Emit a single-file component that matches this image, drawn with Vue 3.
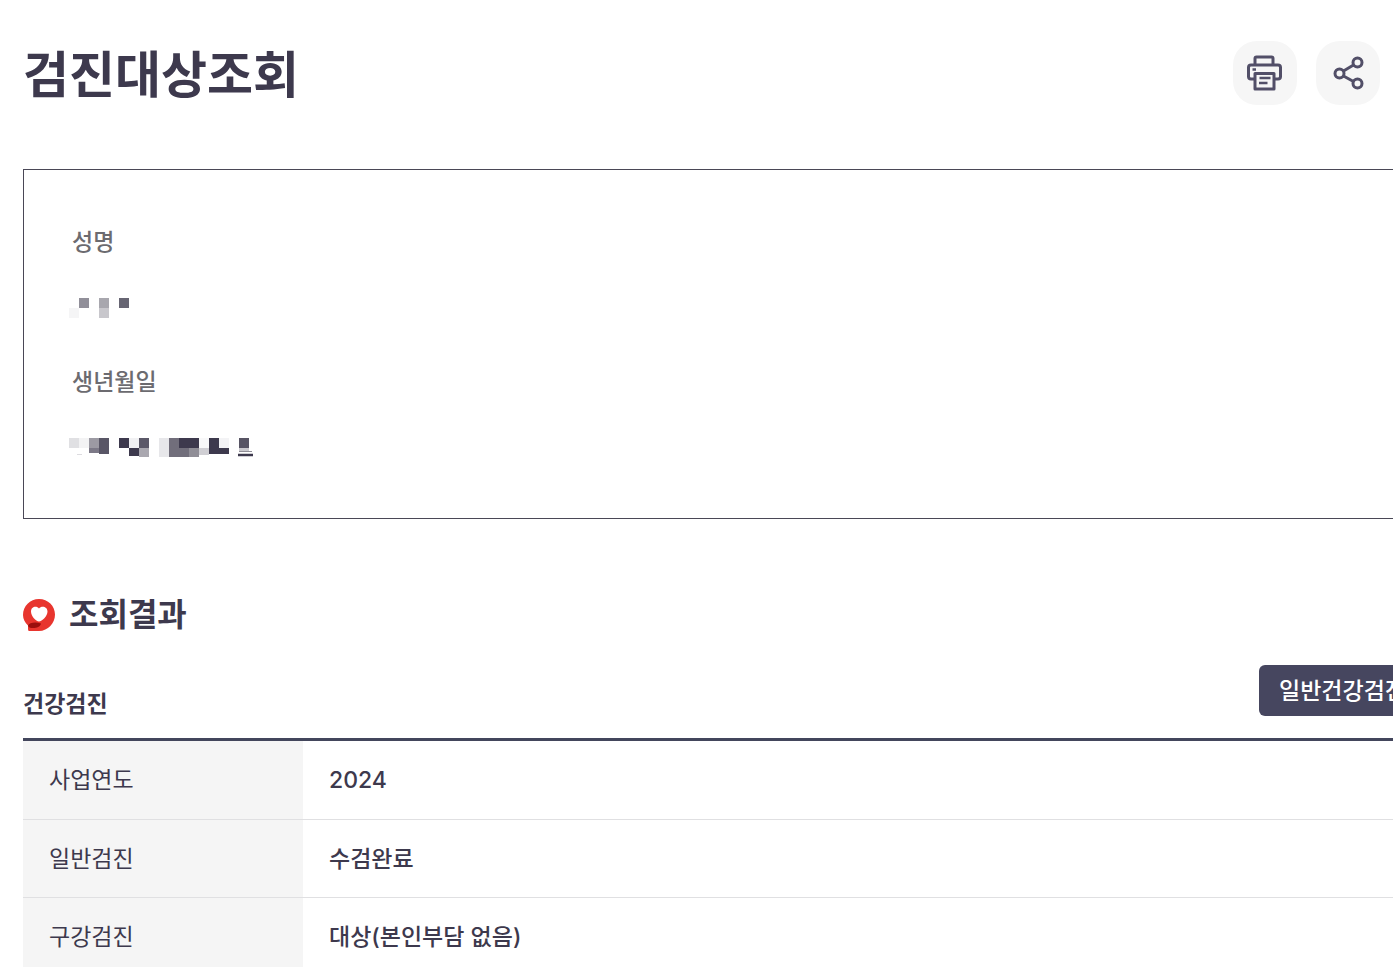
<script setup>
const rows = [
  { label: '사업연도', value: '2024' },
  { label: '일반검진', value: '수검완료' },
  { label: '구강검진', value: '대상(본인부담 없음)' },
]

const nameBlocks = [
  [0, 10, 10, 10, '#f5f5f6'],
  [10, 0, 10, 10, '#918f99'],
  [30, 0, 10, 10, '#a8a7ae'],
  [30, 10, 10, 10, '#c8c7cc'],
  [50, 0, 10, 10, '#676573'],
]

const birthBlocks = [
  [0, 0, 10, 10, '#e0e0e3'],
  [10, 0, 10, 10, '#f3f3f4'],
  [20, 0, 10, 10, '#9c9aa3'],
  [30, 0, 10, 10, '#595666'],
  [20, 10, 10, 5, '#7c7987'],
  [30, 10, 10, 6, '#595666'],
  [50, 0, 10, 10, '#3d394d'],
  [60, 0, 10, 10, '#f1f1f3'],
  [70, 0, 10, 10, '#5b5868'],
  [60, 10, 10, 8, '#3d394d'],
  [70, 10, 10, 9, '#a9a7af'],
  [90, 0, 10, 19, '#e7e7ea'],
  [100, 0, 10, 19, '#716e7b'],
  [110, 0, 20, 10, '#3d394d'],
  [110, 10, 10, 9, '#716e7b'],
  [120, 10, 10, 9, '#8f8d96'],
  [130, 10, 10, 7, '#d0cfd4'],
  [130, 0, 10, 10, '#f8f8f9'],
  [140, 0, 10, 10, '#3d394d'],
  [150, 0, 10, 10, '#f3f3f5'],
  [140, 10, 20, 6, '#3d394d'],
  [170, 0, 10, 10, '#575464'],
  [170, 10, 10, 3, '#c9c8cd'],
]
</script>

<template>
  <main class="page">
    <header class="head">
      <h1>검진대상조회</h1>
      <div class="tools">
        <button type="button" class="tool" aria-label="인쇄">
          <svg width="36" height="36" viewBox="0 0 36 36" fill="none" stroke="#524f68" stroke-width="3" stroke-linejoin="round">
            <path d="M8 10V3.500Q8 2 9.500 2H24.500Q26 2 26 3.500V10" />
            <path d="M8 24H4Q1.500 24 1.500 21.500V12.500Q1.500 10 4 10H31Q33.500 10 33.500 12.500V21.500Q33.500 24 31 24H27" />
            <path d="M8 18.500H27V34H8Z" />
            <path d="M12.500 23H23.500M12 28H20.500M5.500 14.500H9" stroke-width="2.500" />
          </svg>
        </button>
        <button type="button" class="tool" aria-label="공유">
          <svg width="36" height="36" viewBox="0 0 36 36" fill="none" stroke="#524f68" stroke-width="3">
            <circle cx="27.500" cy="7.500" r="4.500" />
            <circle cx="9.500" cy="18.500" r="4.500" />
            <circle cx="27.500" cy="28.500" r="4.500" />
            <path d="M13.500 16L23.500 10M13.500 21L23.500 26.500" />
          </svg>
        </button>
      </div>
    </header>

    <dl class="person">
      <dt>성명</dt>
      <dd>
        <svg width="60" height="20" viewBox="0 0 60 20" shape-rendering="crispEdges" aria-hidden="true">
          <rect v-for="(b, i) in nameBlocks" :key="i" :x="b[0]" :y="b[1]" :width="b[2]" :height="b[3]" :fill="b[4]" />
        </svg>
      </dd>
      <dt>생년월일</dt>
      <dd>
        <svg width="186" height="20" viewBox="0 0 186 20" aria-hidden="true">
          <rect v-for="(b, i) in birthBlocks" :key="i" :x="b[0]" :y="b[1]" :width="b[2]" :height="b[3]" :fill="b[4]" shape-rendering="crispEdges" />
          <path d="M8 16.500H13" stroke="#dddce0" />
          <path d="M169 17H184" stroke="#3d394d" stroke-width="2.500" />
          <path d="M170 13.500H183" stroke="#8f8d96" />
        </svg>
      </dd>
    </dl>

    <h2>
      <svg width="32" height="32" viewBox="0 0 32 32" aria-hidden="true">
        <path d="M16 0C25 0 32 7 32 15.500C32 24 25 32 16 32H6Q5 32 5 30V26.500C2 24 0 20 0 16C0 7 7 0 16 0Z" fill="#e8352e" />
        <path d="M5 26.500C6 24 12 22.500 18 24.500C17 28 14 29 10 29C7 29 5.500 28.500 5 26.500Z" fill="#9a0f0e" />
        <path d="M16 22.500C13 22 8 17.500 8 12.500C8 7 14 6.500 16 9.500C18 6.500 24.500 7 24.500 12.500C24.500 17.500 19 22 16 22.500Z" fill="#fff" />
      </svg>
      조회결과
    </h2>

    <section class="result">
      <div class="bar">
        <h3 id="result-title">건강검진</h3>
        <button type="button" class="more">일반건강검진</button>
      </div>
      <table aria-labelledby="result-title">
        <tbody>
          <tr v-for="row in rows" :key="row.label">
            <th scope="row">{{ row.label }}</th>
            <td>{{ row.value }}</td>
          </tr>
        </tbody>
      </table>
    </section>
  </main>
</template>

<style>
html,
body {
  margin: 0;
  overflow: hidden;
  background: #fff;
}
</style>

<style scoped>
.page {
  box-sizing: border-box;
  height: 100vh;
  padding: 41px 0 0 23px;
  overflow: hidden;
  color: #3d394d;
  font-family: Inter, "Noto Sans CJK KR", sans-serif;
  font-size: 23px;
  line-height: 34px;
}

.head {
  display: flex;
  justify-content: space-between;
  align-items: center;
  height: 64px;
  padding-right: 13px;
}

h1,
h2,
h3 {
  margin: 0;
  font-weight: 700;
}

h1 {
  padding-top: 4px;
  font-size: 50px;
  line-height: 64px;
}

.tools {
  display: flex;
  gap: 19px;
}

.tool {
  display: flex;
  align-items: center;
  justify-content: center;
  width: 64px;
  height: 64px;
  padding: 0;
  border: 0;
  border-radius: 24px;
  background: #f6f6f6;
}

.person {
  margin: 64px -33px 0 0;
  padding: 54px 48px 53px;
  border: 1px solid #4a4856;
}

dt {
  color: #6c6b70;
  font-weight: 500;
  line-height: 36px;
}

dd {
  display: flex;
  align-items: center;
  height: 34px;
  margin: 31px 0 39px -3px;
}

dd:last-child {
  margin-bottom: 0;
}

h2 {
  display: flex;
  align-items: center;
  gap: 14px;
  margin-top: 72px;
  font-size: 32px;
  line-height: 48px;
}

.result {
  margin: 26px -33px 0 0;
}

.bar {
  display: flex;
  justify-content: space-between;
  align-items: flex-start;
  height: 73px;
}

h3 {
  margin-top: 22px;
  font-size: 23px;
}

.more {
  height: 51px;
  padding: 0 20px;
  border: 0;
  border-radius: 6px;
  background: #46465f;
  color: #fff;
  font: inherit;
  font-weight: 500;
  white-space: nowrap;
}

table {
  width: 100%;
  border-top: 3px solid #43465c;
  border-collapse: separate;
  border-spacing: 0;
}

th,
td {
  box-sizing: border-box;
  padding: 22px 26px 21px;
  border-bottom: 1px solid #e0e0e2;
  text-align: left;
}

tr:first-child > * {
  padding-bottom: 22px;
}

th {
  width: 280px;
  background: #f5f5f5;
  font-weight: 400;
}

td {
  font-weight: 500;
}
</style>
